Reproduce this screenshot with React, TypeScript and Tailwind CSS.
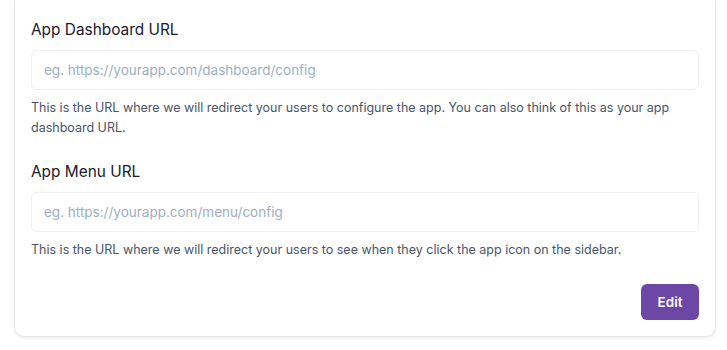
export default function App() {
  return (
    <div className="min-h-[350px] bg-white pl-[14px] pr-[11px] font-['Inter','Liberation_Sans',sans-serif]">
      <div className="rounded-b-[10px] border-x border-b border-[#e5e7eb] bg-white px-4 pb-4 pt-[18px] shadow-[0_2px_3px_rgba(0,0,0,0.06)]">
        <Field
          label="App Dashboard URL"
          placeholder="eg. https://yourapp.com/dashboard/config"
          help="This is the URL where we will redirect your users to configure the app. You can also think of this as your app dashboard URL."
        />
        <div className="mt-[22px]">
          <Field
            label="App Menu URL"
            placeholder="eg. https://yourapp.com/menu/config"
            help="This is the URL where we will redirect your users to see when they click the app icon on the sidebar."
          />
        </div>
        <div className="mt-6 flex justify-end">
          <button className="h-9 w-[58px] rounded-md bg-[#6c47a6] text-[13.5px] font-semibold text-white">Edit</button>
        </div>
      </div>
    </div>
  );
}

function Field({ label, placeholder, help }: { label: string; placeholder: string; help: string }) {
  return (
    <div>
      <label className="block text-[15.4px] leading-6 text-[#1a202c]">{label}</label>
      <input
        className="mt-2 block h-10 w-full rounded-md border border-[#edf0f4] px-3 text-[13.5px] text-[#1a202c] outline-none placeholder:text-[#a0aec0]"
        placeholder={placeholder}
      />
      <p className="mt-2 text-[12.5px] leading-5 text-[#4a5568]">{help}</p>
    </div>
  );
}
